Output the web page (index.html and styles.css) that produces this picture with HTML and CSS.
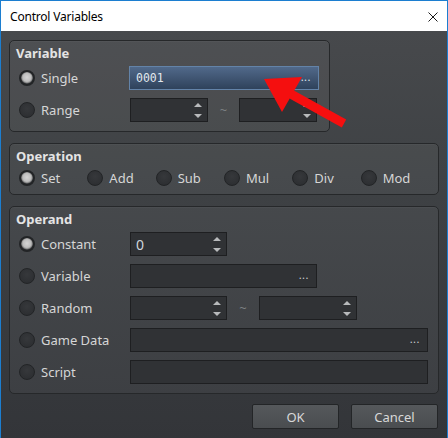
FILE: index.html
```html
<!DOCTYPE html>
<html lang="en">

<head>
    <meta charset="UTF-8">
    <meta name="viewport" content="width=device-width, initial-scale=1.0">
    <title>Control Variables</title>
    <link rel="stylesheet" href="styles.css">
</head>

<body>
    <div class="window">
        <div class="titlebar">
            <span class="title">Control Variables</span>
            <svg class="close" width="10" height="10" viewBox="0 0 10 10">
                <path d="M0.5 0.5L9.5 9.5M9.5 0.5L0.5 9.5" stroke="#1a1a1a" stroke-width="1" fill="none" />
            </svg>
        </div>

        <div class="dialog">
            <!-- Variable -->
            <div class="group group-variable">
                <div class="group-title">Variable</div>
                <div class="row">
                    <label class="opt"><span class="radio checked"></span>Single</label>
                    <div class="field field-active field-md">
                        <span class="value mono">0001</span>
                        <span class="dots">...</span>
                    </div>
                </div>
                <div class="row">
                    <label class="opt"><span class="radio"></span>Range</label>
                    <div class="spin spin-sm">
                        <span class="value"></span>
                        <span class="spin-btns"><i class="up"></i><i class="down"></i></span>
                    </div>
                    <span class="tilde">~</span>
                    <div class="spin spin-sm">
                        <span class="value"></span>
                        <span class="spin-btns"><i class="up"></i><i class="down"></i></span>
                    </div>
                </div>
            </div>

            <!-- Operation -->
            <div class="group group-operation">
                <div class="group-title">Operation</div>
                <div class="row ops">
                    <label class="opt op"><span class="radio checked"></span>Set</label>
                    <label class="opt op"><span class="radio"></span>Add</label>
                    <label class="opt op"><span class="radio"></span>Sub</label>
                    <label class="opt op"><span class="radio"></span>Mul</label>
                    <label class="opt op"><span class="radio"></span>Div</label>
                    <label class="opt op"><span class="radio"></span>Mod</label>
                </div>
            </div>

            <!-- Operand -->
            <div class="group group-operand">
                <div class="group-title">Operand</div>
                <div class="row">
                    <label class="opt"><span class="radio checked"></span>Constant</label>
                    <div class="spin spin-md">
                        <span class="value num">0</span>
                        <span class="spin-btns"><i class="up"></i><i class="down"></i></span>
                    </div>
                </div>
                <div class="row">
                    <label class="opt"><span class="radio"></span>Variable</label>
                    <div class="field field-md2">
                        <span class="value"></span>
                        <span class="dots">...</span>
                    </div>
                </div>
                <div class="row">
                    <label class="opt"><span class="radio"></span>Random</label>
                    <div class="spin spin-md">
                        <span class="value"></span>
                        <span class="spin-btns"><i class="up"></i><i class="down"></i></span>
                    </div>
                    <span class="tilde tilde-wide">~</span>
                    <div class="spin spin-md2">
                        <span class="value"></span>
                        <span class="spin-btns"><i class="up"></i><i class="down"></i></span>
                    </div>
                </div>
                <div class="row">
                    <label class="opt"><span class="radio"></span>Game Data</label>
                    <div class="field field-lg">
                        <span class="value"></span>
                        <span class="dots">...</span>
                    </div>
                </div>
                <div class="row">
                    <label class="opt"><span class="radio"></span>Script</label>
                    <div class="field field-lg">
                        <span class="value"></span>
                    </div>
                </div>
            </div>

            <div class="buttons">
                <button class="btn">OK</button>
                <button class="btn">Cancel</button>
            </div>
        </div>

        <!-- red pointer over the variable field -->
        <svg class="pointer" width="448" height="438" viewBox="0 0 448 438">
            <line x1="289" y1="93" x2="344" y2="123.5" stroke="#f50f0f" stroke-width="9" />
            <polygon points="264,79 302,77 282,112" fill="#f50f0f" />
        </svg>
    </div>
</body>

</html>
```

FILE: styles.css
```css
/* Control Variables dialog */
body {
    margin: 0;
    padding: 0;
    background-color: #3a3c3f;
    font-family: "Noto Sans", "Open Sans", sans-serif;
}

.window {
    position: relative;
    width: 446px;
    height: 437px;
    border: 1px solid #1c7ed0;
    border-bottom: none;
    display: flex;
    flex-direction: column;
    overflow: hidden;
}

.titlebar {
    height: 30px;
    background-color: #ffffff;
    display: flex;
    align-items: center;
    justify-content: space-between;
    padding: 0 9px 0 9px;
}

.title {
    font-size: 12px;
    color: #000000;
    font-family: "Noto Sans", sans-serif;
    letter-spacing: -0.2px;
}

.close {
    display: block;
    margin-top: 1px;
}

.dialog {
    flex: 1;
    padding: 9px 8px 0 8px;
    background: linear-gradient(#47494c, #3f4245 35%, #333539);
    display: flex;
    flex-direction: column;
    gap: 11px;
}

/* group boxes */
.group {
    border: 1px solid #26282a;
    border-radius: 5px;
    background-color: rgba(255, 255, 255, 0.045);
    padding: 3px 9px 9px 6px;
    box-shadow: inset 0 1px 0 rgba(255, 255, 255, 0.03);
}

.group-variable {
    width: 304px;
}

.group-operation {
    padding-bottom: 4px;
}

.group-operand {
    margin-bottom: -1px;
}

.group-title {
    height: 18px;
    line-height: 18px;
    font-size: 13px;
    font-weight: bold;
    color: #e4e4e4;
    margin-bottom: 4px;
}

.group-operation .group-title {
    margin-bottom: 1px;
}

.row {
    display: flex;
    align-items: center;
    height: 24px;
    padding-left: 3px;
    margin-bottom: 8px;
}

.row:last-child {
    margin-bottom: 0;
}

.opt {
    width: 111px;
    display: flex;
    align-items: center;
    gap: 6px;
    font-size: 13px;
    color: #d6d6d6;
}

.op {
    width: 70px;
}

/* radio buttons */
.radio {
    width: 14px;
    height: 14px;
    border-radius: 50%;
    border: 1px solid #222426;
    background: radial-gradient(circle at 50% 40%, #36383b, #2a2c2f);
    flex-shrink: 0;
}

.radio.checked {
    width: 12px;
    height: 12px;
    border: 2px solid #222426;
    background: radial-gradient(circle at 50% 45%, #d4d4d4 0, #bdbdbd 4px, #9a9a9a 5px, #2f3134 6.5px);
}

/* inputs */
.field,
.spin {
    height: 22px;
    border: 1px solid #1e1f21;
    background-color: #303235;
    display: flex;
    align-items: center;
    box-sizing: content-box;
}

.value {
    flex: 1;
    padding-left: 6px;
    font-size: 13px;
    color: #d8dde2;
}

.mono {
    font-family: "DejaVu Sans Mono", monospace;
    font-size: 11.5px;
    color: #e3e8ee;
}

.num {
    font-size: 14px;
    padding-left: 5px;
    color: #cfd6dc;
}

.field-active {
    border-color: #6383a8;
    background: linear-gradient(#51698a, #2f425b);
}

.field-md {
    width: 188px;
    margin-left: -1px;
}

.field-md2 {
    width: 185px;
}

.field-lg {
    width: 296px;
}

.dots {
    font-size: 11px;
    color: #c8ccd0;
    letter-spacing: 0.5px;
    padding-right: 7px;
    margin-top: -4px;
}

.field-active .dots {
    color: #dfe5ec;
}

.spin-sm {
    width: 76px;
}

.spin-md {
    width: 95px;
}

.spin-md2 {
    width: 96px;
}

.spin-btns {
    width: 18px;
    display: flex;
    flex-direction: column;
    align-items: center;
    gap: 7px;
}

.spin-btns i {
    display: block;
    width: 0;
    height: 0;
    border-left: 4px solid transparent;
    border-right: 4px solid transparent;
}

.spin-btns .up {
    border-bottom: 4px solid #b8babc;
}

.spin-btns .down {
    border-top: 4px solid #b8babc;
}

.tilde {
    width: 31px;
    text-align: center;
    font-size: 13px;
    color: #7e8184;
}

.tilde-wide {
    width: 32px;
}

/* OK / Cancel */
.buttons {
    display: flex;
    justify-content: flex-end;
    gap: 12px;
    padding-right: 1px;
}

.btn {
    width: 87px;
    height: 25px;
    border: 1px solid #232527;
    border-radius: 2px;
    background: linear-gradient(#55585b, #4a4d50);
    color: #d8d8d8;
    font-family: "Noto Sans", sans-serif;
    font-size: 13px;
    padding: 0;
}

.pointer {
    position: absolute;
    left: -1px;
    top: -1px;
    pointer-events: none;
}
```
